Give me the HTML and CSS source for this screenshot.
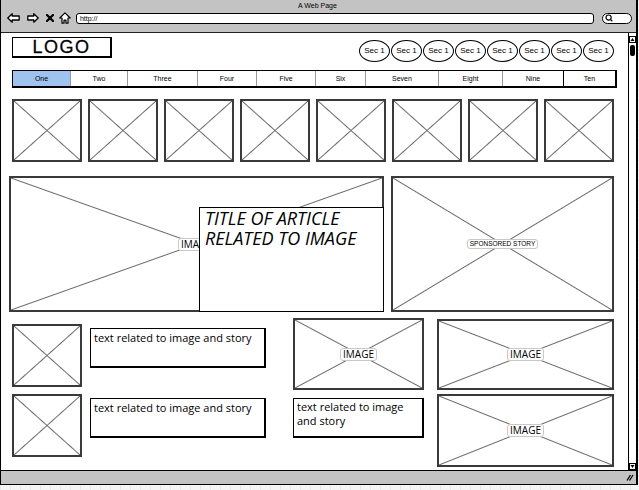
FILE: index.html
```html
<!DOCTYPE html>
<html lang="en">
<head>
    <meta charset="UTF-8">
    <meta name="viewport" content="width=device-width, initial-scale=1.0">
    <title>A Web Page</title>
    <link rel="stylesheet" href="styles.css">
</head>
<body>
<div class="window">
    <div class="titlebar">
        <div class="title">A Web Page</div>
        <div class="navbar">
            <svg class="nav-back" width="13" height="10" viewBox="0 0 13 10"><path d="M0.8 5 L5.2 0.8 L5.2 3 L12.2 3 L12.2 7 L5.2 7 L5.2 9.2 Z" fill="#fff" stroke="#000" stroke-width="1.3" stroke-linejoin="round"/></svg>
            <svg class="nav-fwd" width="12" height="10" viewBox="0 0 12 10"><path d="M11.2 5 L6.8 0.8 L6.8 3 L0.8 3 L0.8 7 L6.8 7 L6.8 9.2 Z" fill="#fff" stroke="#000" stroke-width="1.3" stroke-linejoin="round"/></svg>
            <svg class="nav-stop" width="8" height="8" viewBox="0 0 8 8"><path d="M1 1 L7 7 M7 1 L1 7" stroke="#000" stroke-width="2.2" stroke-linecap="round"/></svg>
            <svg class="nav-home" width="12" height="12" viewBox="0 0 12 12"><path d="M6 0.8 L11.2 6 L9 6 L9 11.2 L7 11.2 L7 8.2 L5 8.2 L5 11.2 L3 11.2 L3 6 L0.8 6 Z" fill="#fff" stroke="#000" stroke-width="1.2" stroke-linejoin="round"/></svg>
            <div class="url">http://</div>
            <div class="search">
                <svg width="8" height="8" viewBox="0 0 8 8"><circle cx="3.6" cy="3.6" r="2.6" fill="none" stroke="#000" stroke-width="1.2"/><path d="M5.4 5.4 L7.3 7.3" stroke="#000" stroke-width="1.3"/></svg>
            </div>
        </div>
    </div>

    <div class="viewport">
        <div class="page">
            <div class="header">
                <div class="logo">LOGO</div>
                <div class="sections">
                    <div class="sec">Sec 1</div>
                    <div class="sec">Sec 1</div>
                    <div class="sec">Sec 1</div>
                    <div class="sec">Sec 1</div>
                    <div class="sec">Sec 1</div>
                    <div class="sec">Sec 1</div>
                    <div class="sec">Sec 1</div>
                    <div class="sec">Sec 1</div>
                </div>
            </div>

            <div class="tabs">
                <div class="tab selected">One</div>
                <div class="tab">Two</div>
                <div class="tab">Three</div>
                <div class="tab">Four</div>
                <div class="tab">Five</div>
                <div class="tab">Six</div>
                <div class="tab">Seven</div>
                <div class="tab">Eight</div>
                <div class="tab">Nine</div>
                <div class="tab last">Ten</div>
            </div>

            <div class="thumbs">
                <div class="ph"></div>
                <div class="ph"></div>
                <div class="ph"></div>
                <div class="ph"></div>
                <div class="ph"></div>
                <div class="ph"></div>
                <div class="ph"></div>
                <div class="ph"></div>
            </div>

            <div class="feature">
                <div class="ph feature-img">
                    <span class="label">IMAGE</span>
                    <div class="article-title">TITLE OF ARTICLE RELATED TO IMAGE</div>
                </div>
                <div class="ph sponsored">
                    <span class="label label-small">SPONSORED STORY</span>
                </div>
            </div>

            <div class="stories">
                <div class="col-left">
                    <div class="story">
                        <div class="ph thumb-sm"></div>
                        <div class="textbox">text related to image and story</div>
                    </div>
                    <div class="story">
                        <div class="ph thumb-sm"></div>
                        <div class="textbox">text related to image and story</div>
                    </div>
                </div>
                <div class="col-mid">
                    <div class="ph img-mid"><span class="label">IMAGE</span></div>
                    <div class="textbox">text related to image and story</div>
                </div>
                <div class="col-right">
                    <div class="ph img-r1"><span class="label">IMAGE</span></div>
                    <div class="ph img-r2"><span class="label">IMAGE</span></div>
                </div>
            </div>
        </div>

        <div class="scrollbar">
            <svg class="arrow-up" width="7" height="7" viewBox="0 0 7 7"><rect x="0.5" y="0.5" width="6" height="6" fill="#fff" stroke="#000"/><path d="M1.5 5 L3.5 2 L5.5 5 Z" fill="#000"/></svg>
            <div class="thumb"></div>
            <svg class="arrow-down" width="7" height="7" viewBox="0 0 7 7"><rect x="0.5" y="0.5" width="6" height="6" fill="#fff" stroke="#000"/><path d="M1.5 2 L3.5 5 L5.5 2 Z" fill="#000"/></svg>
        </div>
    </div>

    <div class="statusbar">
        <svg class="grip" width="8" height="7" viewBox="0 0 8 7"><path d="M1 6.5 L4.5 1 M3.5 6.5 L7 1" stroke="#000" stroke-width="1.3"/></svg>
    </div>
</div>
</body>
</html>
```

FILE: styles.css
```css
* { box-sizing: border-box; }
body {
    margin: 0;
    background-color: #f5f5f5;
    background-image:
        linear-gradient(to right, #e9e9e9 1px, transparent 1px),
        linear-gradient(to bottom, #e9e9e9 1px, transparent 1px);
    background-size: 10px 10px;
    font-family: "Liberation Sans", Arial, sans-serif;
    color: #000;
}

.window {
    width: 638px;
    height: 485px;
    border-left: 1px solid #000;
    border-right: 2px solid #000;
    border-bottom: 1px solid #000;
    display: flex;
    flex-direction: column;
    background: #fff;
}

/* browser chrome */
.titlebar {
    height: 33px;
    background: #c3c3c3;
    border-bottom: 1px solid #222;
}
.title {
    height: 11px;
    line-height: 11px;
    font-size: 7px;
    text-align: center;
    padding-right: 2px;
}
.navbar {
    display: flex;
    align-items: center;
    height: 14px;
    padding: 0 4px 0 6px;
}
.nav-back { margin-right: 7px; }
.nav-fwd { margin-right: 7px; }
.nav-stop { margin-right: 5px; }
.nav-home { margin-right: 5px; margin-top: -1px; }
.url {
    width: 519px;
    height: 11px;
    border: 1px solid #000;
    border-radius: 3px;
    background: #fff;
    font-size: 7px;
    line-height: 9px;
    padding-left: 3px;
    margin-right: 8px;
}
.search {
    width: 30px;
    height: 11px;
    border: 1px solid #000;
    border-radius: 6px;
    background: #fff;
    display: flex;
    align-items: center;
    padding-left: 2px;
}

.viewport {
    height: 438px;
    display: flex;
    border-bottom: 1px solid #000;
}
.page {
    flex: 1;
    padding: 4px 14px 0 11px;
}
.scrollbar {
    width: 8px;
    border-left: 1px solid #000;
    display: flex;
    flex-direction: column;
    align-items: center;
    padding: 3px 0 0 0;
}
.thumb {
    width: 5px;
    height: 11px;
    background: #000;
    border-radius: 2px;
    margin-top: 2px;
}
.arrow-down { margin-top: auto; }

.statusbar {
    flex: 1;
    background: #c3c3c3;
    display: flex;
    justify-content: flex-end;
    align-items: center;
    padding-right: 2px;
}

/* header */
.header {
    display: flex;
    justify-content: space-between;
    align-items: flex-start;
    height: 25px;
}
.logo {
    width: 100px;
    height: 21px;
    border: 1px solid #000;
    border-right-width: 2px;
    border-bottom-width: 2px;
    font-size: 18px;
    letter-spacing: 1.5px;
    line-height: 18px;
    text-align: center;
    -webkit-text-stroke: 0.3px #000;
}
.sections {
    display: flex;
    gap: 1px;
    margin-top: 3px;
}
.sec {
    width: 31px;
    height: 22px;
    border: 1px solid #000;
    border-radius: 50%;
    font-size: 8px;
    line-height: 20px;
    text-align: center;
}

/* tabs */
.tabs {
    display: grid;
    grid-template-columns: 57px 57px 70px 59px 59px 50px 73px 64px 61px 1fr;
    height: 18px;
    margin: 8px -3px 0 0;
    border: 1px solid #000;
    border-right-width: 2px;
    border-bottom-width: 2px;
}
.tab {
    font-size: 7px;
    text-align: center;
    line-height: 15px;
    border-left: 1px solid #999;
}
.tab.selected {
    border-left: none;
    background: #9fc2ee;
}
.tab.last { border-left-color: #000; }

/* image placeholders */
.ph {
    border: 2px solid #3a3a3a;
    background:
        linear-gradient(to top right, transparent calc(50% - 1px), #6a6a6a 50%, transparent calc(50% + 1px)),
        linear-gradient(to bottom right, transparent calc(50% - 1px), #6a6a6a 50%, transparent calc(50% + 1px));
    background-color: #fff;
    display: flex;
    align-items: center;
    justify-content: center;
}
.label {
    font-family: "Open Sans", sans-serif;
    font-size: 10px;
    line-height: 11px;
    background: #fff;
    border: 1px solid #c8c8c8;
    border-radius: 3px;
    padding: 0 2px;
}
.label-small {
    font-family: "Liberation Sans", Arial, sans-serif;
    font-size: 6.5px;
    line-height: 8px;
    padding: 0 2px;
}

.thumbs {
    display: grid;
    grid-template-columns: repeat(8, 1fr);
    gap: 6px;
    height: 63px;
    margin-top: 11px;
}

.feature {
    display: grid;
    grid-template-columns: 375px 1fr;
    gap: 7px;
    height: 136px;
    margin: 14px 0 0 -3px;
}
.feature-img { position: relative; }
.article-title {
    position: absolute;
    right: -2px;
    bottom: -2px;
    width: 185px;
    height: 105px;
    border: 1px solid #000;
    background: #fff;
    padding: 0 5px;
    font-family: "Open Sans", sans-serif;
    font-style: italic;
    font-size: 18px;
    line-height: 20px;
}

/* stories */
.stories {
    display: flex;
    align-items: flex-start;
    margin-top: 6px;
}
.textbox {
    height: 40px;
    border: 1px solid #000;
    border-right-width: 2px;
    border-bottom-width: 2px;
    font-family: "Open Sans", sans-serif;
    font-size: 11px;
    line-height: 14px;
    padding: 1px 3px;
}
.col-left {
    width: 254px;
    display: flex;
    flex-direction: column;
    gap: 7px;
    margin-top: 6px;
}
.story {
    display: flex;
    align-items: flex-start;
    gap: 8px;
}
.thumb-sm {
    width: 70px;
    height: 63px;
    flex-shrink: 0;
}
.story .textbox {
    flex: 1;
    margin-top: 4px;
    padding-top: 2px;
}
.col-mid {
    width: 131px;
    margin-left: 27px;
    display: flex;
    flex-direction: column;
    gap: 8px;
}
.img-mid { height: 72px; }
.col-right {
    flex: 1;
    margin-left: 13px;
    display: flex;
    flex-direction: column;
    gap: 4px;
    margin-top: 1px;
}
.img-r1 { height: 71px; }
.img-r2 { height: 73px; }
```
